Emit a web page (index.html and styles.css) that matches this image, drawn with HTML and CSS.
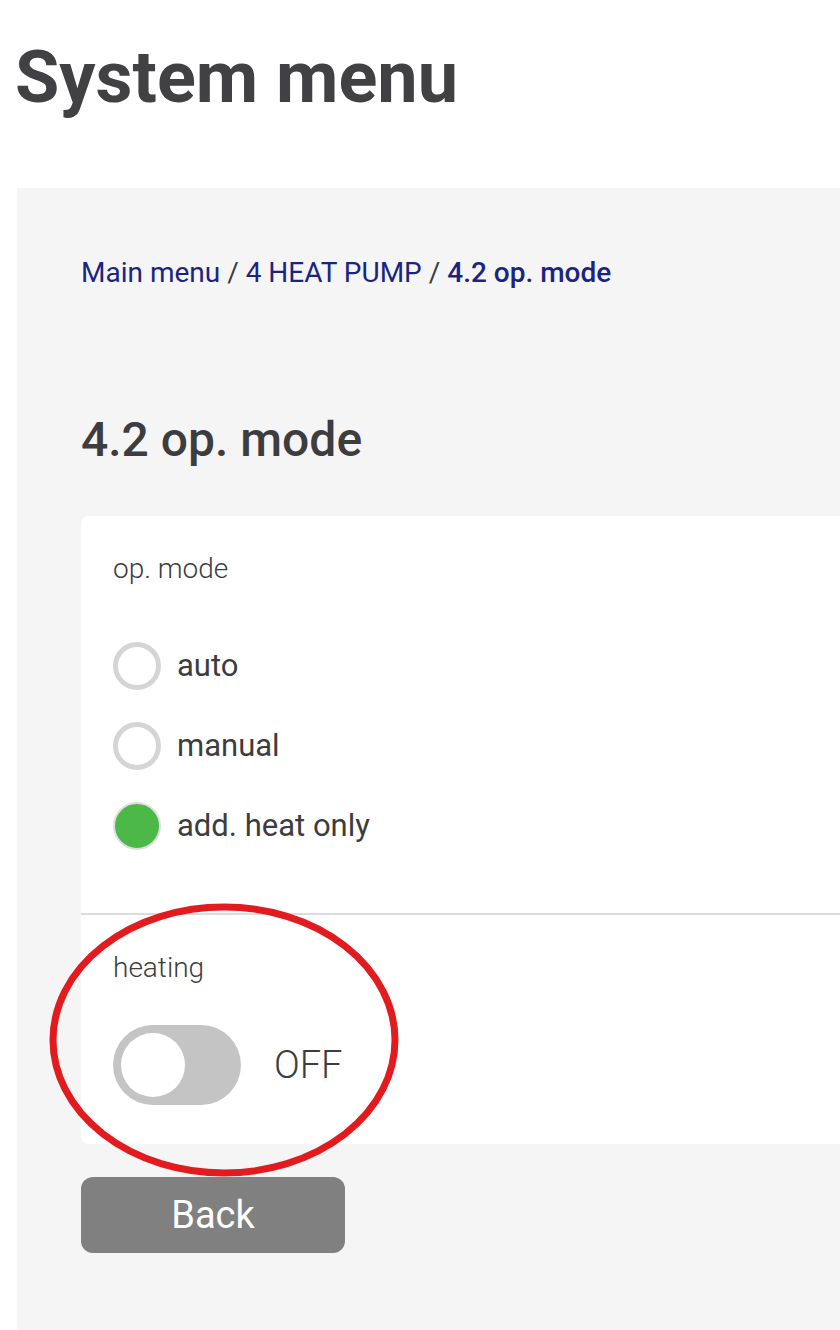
FILE: index.html
```html
<!DOCTYPE html>
<html lang="en">
<head>
<meta charset="utf-8">
<title>System menu</title>
<link rel="stylesheet" href="styles.css">
</head>
<body>
<h1 class="page-title">System menu</h1>
<main class="panel">
  <nav class="breadcrumb">
    <a href="#">Main menu</a><span class="sep"> / </span><a href="#">4 HEAT PUMP</a><span class="sep"> / </span><span class="current">4.2 op. mode</span>
  </nav>
  <h2 class="section-title">4.2 op. mode</h2>
  <div class="card">
    <section class="card-section first">
      <div class="field-label">op. mode</div>
      <div class="radio-list">
        <label class="radio-row"><span class="radio"></span><span class="radio-text">auto</span></label>
        <label class="radio-row"><span class="radio"></span><span class="radio-text">manual</span></label>
        <label class="radio-row"><span class="radio checked"></span><span class="radio-text">add. heat only</span></label>
      </div>
    </section>
    <section class="card-section second">
      <div class="field-label">heating</div>
      <div class="toggle-row">
        <span class="toggle"><span class="knob"></span></span>
        <span class="toggle-text">OFF</span>
      </div>
    </section>
  </div>
  <button class="back-btn" type="button">Back</button>
</main>
<svg class="highlight" width="360" height="290" viewBox="0 0 360 290" aria-hidden="true">
  <ellipse cx="175" cy="138" rx="171" ry="133" fill="none" stroke="#e21b1e" stroke-width="7"/>
</svg>
</body>
</html>
```
FILE: styles.css
```css
html, body {
  margin: 0;
  padding: 0;
  overflow: hidden;
  background: #ffffff;
}
body {
  font-family: Roboto, "Liberation Sans", Arial, sans-serif;
  color: #3d3c3f;
  position: relative;
  width: 840px;
  min-height: 1330px;
}
.page-title {
  margin: 36px 0 68px 15px;
  font-size: 72px;
  line-height: 84px;
  font-weight: 700;
  color: #414042;
}
.panel {
  margin-left: 17px;
  background: #f5f5f5;
  padding: 69px 0 77px 64px;
}
.breadcrumb {
  font-size: 28px;
  line-height: 32px;
  color: #1b2581;
}
.breadcrumb a {
  color: #1b2581;
  text-decoration: none;
}
.breadcrumb .sep {
  color: #3d3c3f;
}
.breadcrumb .current {
  font-weight: 500;
}
.section-title {
  margin: 123px 0 48px 0;
  font-size: 48px;
  line-height: 56px;
  font-weight: 500;
  color: #3d3c3f;
}
.card {
  background: #ffffff;
  border-radius: 8px 0 0 8px;
}
.card-section {
  padding-left: 32px;
}
.card-section.first {
  padding-top: 37px;
  padding-bottom: 63px;
}
.card-section.second {
  border-top: 2px solid #dcdcdc;
  padding-top: 37px;
  padding-bottom: 39px;
}
.field-label {
  font-size: 28px;
  line-height: 32px;
  font-weight: 300;
  color: #3d3c3f;
}
.radio-list {
  margin-top: 57px;
  display: flex;
  flex-direction: column;
  gap: 32px;
}
.radio-row {
  display: flex;
  align-items: center;
  gap: 16px;
  height: 48px;
}
.radio {
  box-sizing: border-box;
  width: 48px;
  height: 48px;
  border-radius: 50%;
  border: 5px solid #d5d5d5;
  background: #ffffff;
  flex: none;
}
.radio.checked {
  border: 2px solid #dedede;
  background: #4cb848;
}
.radio-text {
  font-size: 31px;
  line-height: 34px;
  color: #3d3c3f;
}
.toggle-row {
  margin-top: 41px;
  display: flex;
  align-items: center;
  gap: 33px;
}
.toggle {
  box-sizing: border-box;
  width: 128px;
  height: 80px;
  border-radius: 40px;
  background: #c4c4c4;
  padding: 8px;
  display: flex;
  flex: none;
}
.knob {
  width: 64px;
  height: 64px;
  border-radius: 50%;
  background: #ffffff;
}
.toggle-text {
  font-size: 38px;
  line-height: 44px;
  font-weight: 300;
  color: #3d3c3f;
}
.back-btn {
  margin-top: 33px;
  width: 264px;
  height: 76px;
  border: none;
  border-radius: 12px;
  background: #808080;
  color: #ffffff;
  font-family: Roboto, "Liberation Sans", Arial, sans-serif;
  font-size: 38px;
  font-weight: 400;
  padding: 0;
  display: block;
}
.highlight {
  position: absolute;
  left: 49px;
  top: 902px;
}
```
